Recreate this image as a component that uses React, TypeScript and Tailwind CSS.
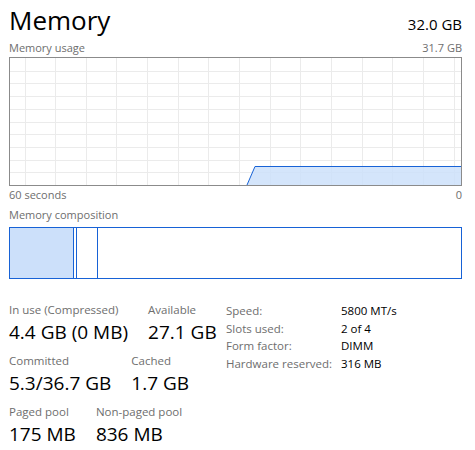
const font = { fontFamily: '"Open Sans", "Noto Sans", sans-serif' };

const vLines = Array.from({ length: 15 }, (_, k) => 14.5 + k * 30.65);
const hLines = Array.from({ length: 9 }, (_, k) => Math.round((k + 1) * 12.7) + 0.5);

function UsageGraph() {
  return (
    <div className="h-[129px] border border-[#8b8b8b] bg-white">
      <svg width="451" height="127" className="block">
        {vLines.map((x) => (
          <line key={x} x1={Math.round(x) + 0.5} y1="0" x2={Math.round(x) + 0.5} y2="127" stroke="#ebebeb" />
        ))}
        {hLines.map((y) => (
          <line key={y} x1="0" y1={y} x2="451" y2={y} stroke="#ebebeb" />
        ))}
        <polygon points="237,127 245,108.5 451,108.5 451,127" fill="#cce0fa" fillOpacity="0.85" />
        <polyline points="237,127 245,108.5 451,108.5" fill="none" stroke="#1762d6" strokeWidth="1" />
      </svg>
    </div>
  );
}

function Composition() {
  return (
    <div className="flex h-[52px] border border-[#1762d6] bg-white">
      <div className="w-[64px] border-r border-[#1762d6] bg-[#cce0fa]" />
      <div className="w-[3px] border-r border-[#1762d6]" />
      <div className="w-[21px] border-r border-[#1762d6]" />
      <div className="flex-1" />
    </div>
  );
}

function Stat({ label, value }: { label: string; value: string }) {
  return (
    <div className="flex flex-col">
      <span className="text-[11.5px] leading-[16px] text-[#6e6e6e]">{label}</span>
      <span className="mt-[1px] text-[19px] leading-[26px] text-black">{value}</span>
    </div>
  );
}

const specs = [
  ['Speed:', '5800 MT/s'],
  ['Slots used:', '2 of 4'],
  ['Form factor:', 'DIMM'],
  ['Hardware reserved:', '316 MB'],
];

export default function App() {
  return (
    <div className="h-[450px] w-[475px] bg-white pl-[9px] pr-[13px] pt-[2px]" style={font}>
      <div className="flex items-baseline justify-between">
        <h1 className="text-[26px] leading-[36px] text-black">Memory</h1>
        <span className="text-[15px] text-black">32.0 GB</span>
      </div>
      <div className="mt-[1px] flex justify-between text-[11px] leading-[18px] text-[#6e6e6e]">
        <span>Memory usage</span>
        <span>31.7 GB</span>
      </div>
      <UsageGraph />
      <div className="flex justify-between text-[11px] leading-[18px] text-[#6e6e6e]">
        <span>60 seconds</span>
        <span>0</span>
      </div>
      <div className="mt-[2px] text-[11px] leading-[18px] text-[#6e6e6e]">Memory composition</div>
      <div className="mt-[3px]">
        <Composition />
      </div>
      <div className="mt-[23px] flex">
        <div className="flex w-[217px] flex-col gap-[8px]">
          <div className="flex gap-5">
            <Stat label="In use (Compressed)" value="4.4 GB (0 MB)" />
            <Stat label="Available" value="27.1 GB" />
          </div>
          <div className="flex gap-5">
            <Stat label="Committed" value="5.3/36.7 GB" />
            <Stat label="Cached" value="1.7 GB" />
          </div>
          <div className="flex gap-5">
            <Stat label="Paged pool" value="175 MB" />
            <Stat label="Non-paged pool" value="836 MB" />
          </div>
        </div>
        <div className="grid grid-cols-[115px_auto] content-start text-[11.5px] leading-[17.7px]">
          {specs.map(([k, v]) => (
            <div key={k} className="contents">
              <span className="text-[#6e6e6e]">{k}</span>
              <span className="text-black">{v}</span>
            </div>
          ))}
        </div>
      </div>
    </div>
  );
}
